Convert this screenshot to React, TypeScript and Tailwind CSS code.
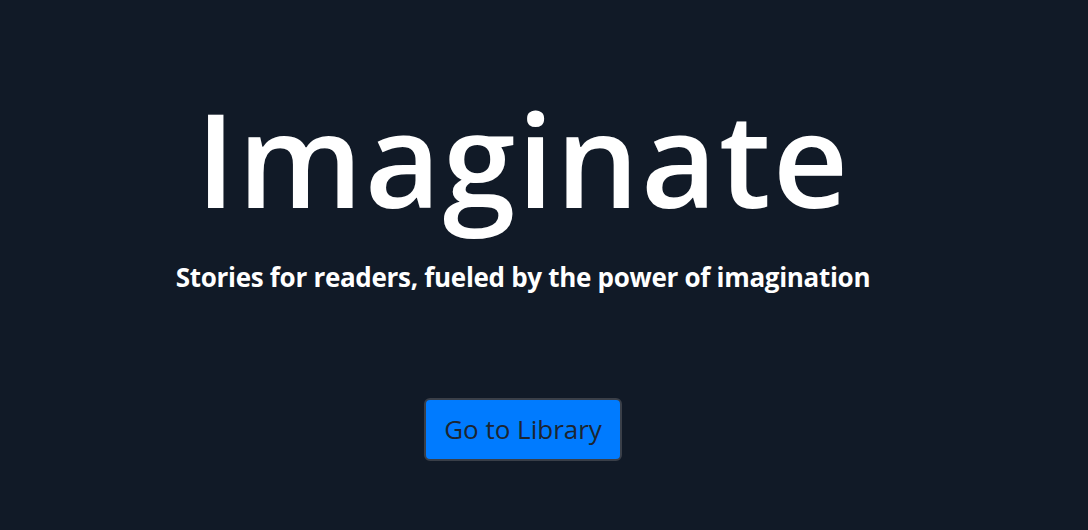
export default function App() {
  return (
    <main
      className="flex h-[530px] w-full flex-col items-center bg-[#111a27] pr-[42px] text-white"
      style={{ fontFamily: '"Open Sans", "Noto Sans", sans-serif' }}
    >
      <h1 className="mt-[77px] text-[131px] font-semibold leading-[160px] tracking-[2px]">
        Imaginate
      </h1>
      <p className="mt-[24px] text-[26px] font-bold leading-[32px] tracking-[-0.3px]">
        Stories for readers, fueled by the power of imagination
      </p>
      <button
        type="button"
        className="mt-[105px] rounded-md border-2 border-[#3a3f48] bg-[#007bff] px-[18px] py-[12px] text-[26px] leading-[35px] text-[#1c2530]"
      >
        Go to Library
      </button>
    </main>
  );
}
